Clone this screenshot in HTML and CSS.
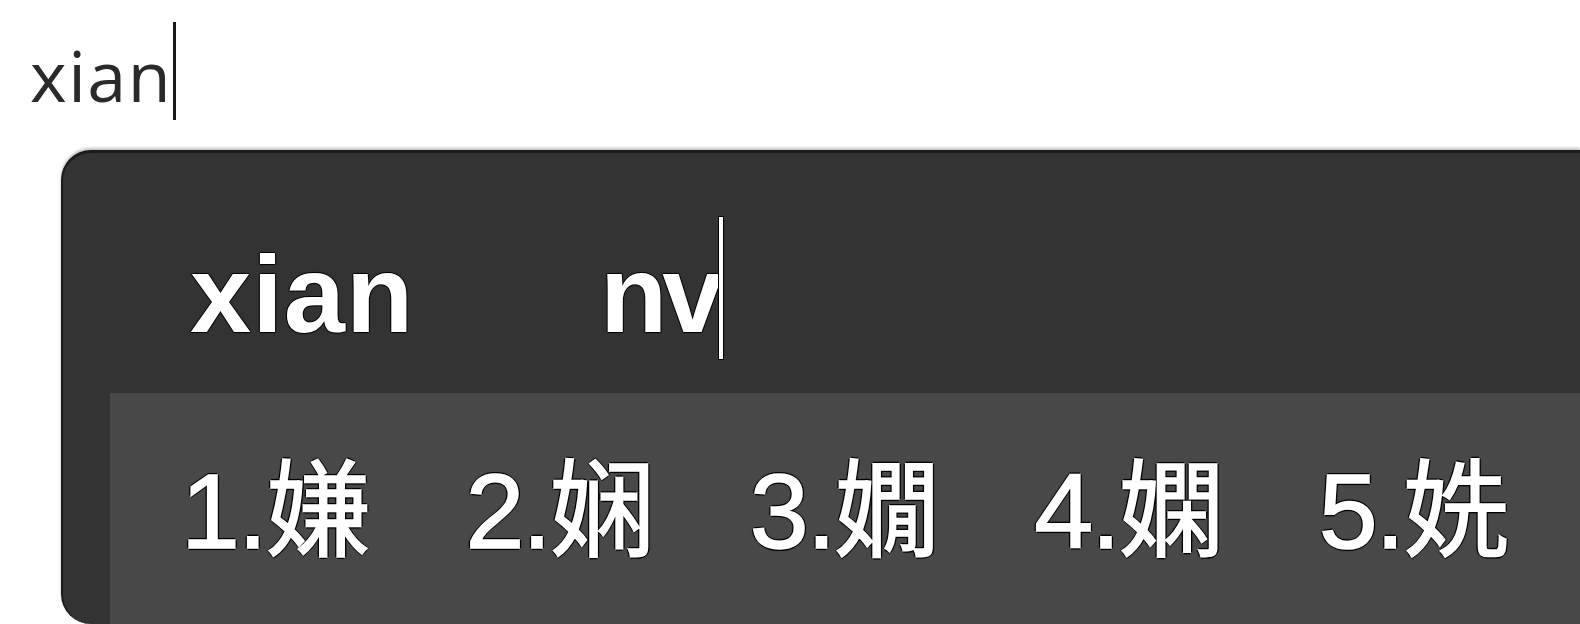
FILE: index.html
```html
<!DOCTYPE html>
<html lang="zh">
<head>
<meta charset="utf-8">
<title>IME</title>
<link rel="stylesheet" href="styles.css">
</head>
<body>
  <div class="input-line">
    <span class="typed">xian</span><span class="caret"></span>
  </div>
  <div class="ime-panel">
    <div class="composition">
      <span class="syllable">xian</span><span class="syllable current">nv</span><span class="ime-caret"></span>
    </div>
    <div class="candidates">
      <span class="cand">1.嫌</span>
      <span class="cand">2.娴</span>
      <span class="cand">3.嫺</span>
      <span class="cand">4.嫻</span>
      <span class="cand">5.姺</span>
    </div>
  </div>
</body>
</html>
```

FILE: styles.css
```css
html, body {
  margin: 0;
  padding: 0;
  background: #ffffff;
  overflow: hidden;
  width: 1580px;
  height: 624px;
}

.input-line {
  height: 150px;
  display: flex;
  align-items: flex-start;
  padding-left: 30px;
  box-sizing: border-box;
}

.typed {
  font-family: "Open Sans", "Noto Sans", sans-serif;
  font-size: 70px;
  letter-spacing: 1.5px;
  line-height: 1;
  color: #2a2a2a;
  margin-top: 40px;
}

.caret {
  width: 3px;
  height: 98px;
  background: #1a1a1a;
  margin-top: 22px;
  margin-left: 1px;
}

.ime-panel {
  margin-left: 61px;
  height: 474px;
  box-sizing: border-box;
  background: #333333;
  border-top: 3px solid #1b1b1b;
  border-left: 2px solid #1b1b1b;
  border-radius: 30px 0 0 30px;
  box-shadow: 0 -2px 3px rgba(0,0,0,0.25);
  overflow: hidden;
  display: flex;
  flex-direction: column;
}

.composition {
  height: 240px;
  flex: none;
  display: flex;
  align-items: center;
  padding-left: 127px;
  box-sizing: border-box;
  padding-top: 42px;
}

.syllable {
  font-family: "Liberation Sans", Arial, sans-serif;
  font-weight: bold;
  font-size: 110px;
  letter-spacing: 1px;
  line-height: 1;
  color: #ffffff;
  text-shadow: -1px 0 #000, 1px 0 #000, 0 -1px #000, 0 1px #000, 0 0 2px #000;
  width: 410px;
}

.syllable.current {
  width: auto;
  letter-spacing: -5px;
}

.ime-caret {
  width: 4px;
  height: 142px;
  background: #ffffff;
  box-shadow: 0 0 0 1px #000;
  margin-left: 1px;
  margin-top: -12px;
}

.candidates {
  flex: 1;
  margin-left: 47px;
  background: #484848;
  display: flex;
  align-items: center;
  padding-left: 71px;
  padding-top: 4px;
  box-sizing: border-box;
  gap: 96px;
  overflow: hidden;
}

.cand {
  font-family: "Liberation Sans", Arial, "Noto Sans CJK SC", sans-serif;
  font-size: 106px;
  line-height: 1;
  color: #ffffff;
  -webkit-text-stroke: 1.5px #ffffff;
  text-shadow: -2px 0 #000, 2px 0 #000, 0 -2px #000, 0 2px #000, 0 0 3px #000;
  white-space: nowrap;
  letter-spacing: -2px;
}
```
